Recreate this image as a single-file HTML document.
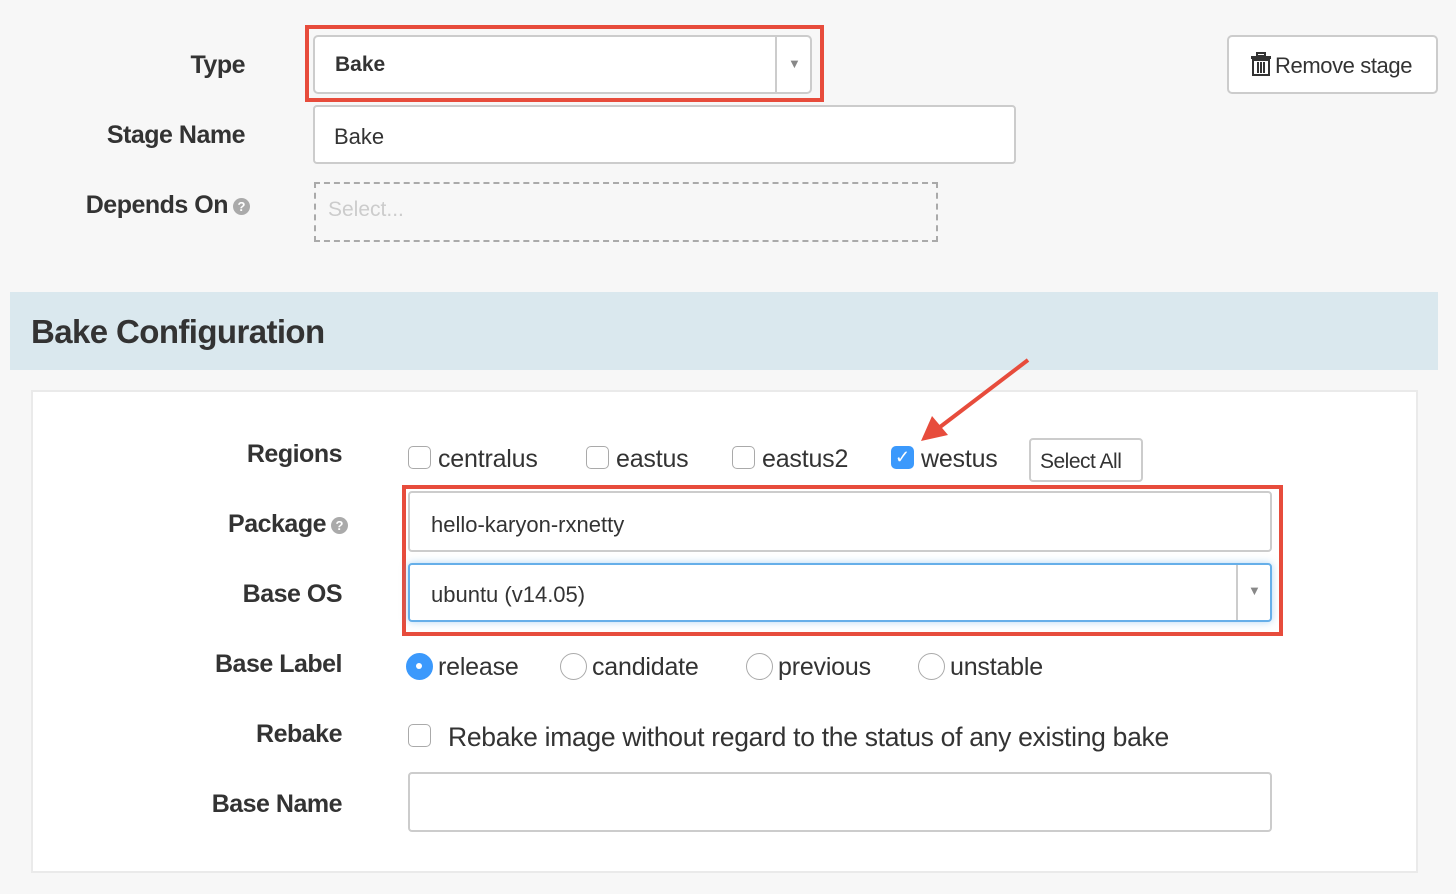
<!DOCTYPE html>
<html><head><meta charset="utf-8"><style>
*{box-sizing:border-box;margin:0;padding:0}
body{width:1456px;height:894px;background:#f7f7f7;font-family:"Liberation Sans",sans-serif;color:#333;position:relative;overflow:hidden}
.a{position:absolute}
.lbl{position:absolute;font-weight:bold;font-size:25px;text-align:right;color:#333;letter-spacing:-0.5px}
.inp{position:absolute;background:#fff;border:2px solid #ccc;border-radius:4px;font-size:22px;color:#333}
.q{display:inline-block;width:17px;height:17px;border-radius:50%;background:#aaa;color:#fff;font-size:13px;text-align:center;line-height:17px;vertical-align:2px;margin-left:5px;font-weight:bold;letter-spacing:0}
.cb{position:absolute;width:23px;height:23px;border:1.5px solid #aaa;border-radius:5px;background:#fff}
.rd{position:absolute;width:27px;height:27px;border:1.5px solid #aaa;border-radius:50%;background:#fff}
.t{position:absolute;font-size:25px;color:#333;letter-spacing:-0.2px}
</style></head><body>
<div class="lbl" style="left:60px;width:185px;top:51px">Type</div>
<div class="a" style="left:305px;top:25px;width:519px;height:77px;border:4px solid #e74c3c"></div>
<div class="inp" style="left:313px;top:35px;width:499px;height:59px;border-radius:5px">
<span class="a" style="left:20px;top:16px;font-weight:bold;font-size:21px">Bake</span>
<span class="a" style="left:460px;top:0;width:2px;height:55px;background:#ccc"></span>
<span class="a" style="left:473px;top:19px;font-size:13px;color:#888">▼</span></div>
<div class="a" style="left:1227px;top:35px;width:211px;height:59px;border:2px solid #ccc;border-radius:5px;background:#fff;font-size:22px;padding:15px 0 0 22px;letter-spacing:-0.4px">
<svg width="20" height="24" viewBox="0 0 20 24" style="vertical-align:-3px;margin-right:4px"><rect x="6" y="1" width="8" height="3" fill="none" stroke="#333" stroke-width="2"/><rect x="0" y="4" width="20" height="3" fill="#333"/><path d="M2 8h16v15H2z" fill="none" stroke="#333" stroke-width="2"/><path d="M7 10v11M10 10v11M13 10v11" stroke="#333" stroke-width="2"/></svg>Remove stage</div>
<div class="lbl" style="left:40px;width:205px;top:121px">Stage Name</div>
<div class="inp" style="left:313px;top:105px;width:703px;height:59px"><span class="a" style="left:19px;top:17px">Bake</span></div>
<div class="lbl" style="left:20px;width:230px;top:191px">Depends On<span class="q">?</span></div>
<div class="a" style="left:314px;top:182px;width:624px;height:60px;border:2px dashed #aaa;font-size:21px;color:#ccc;padding:14px 0 0 12px">Select...</div>
<div class="a" style="left:10px;top:292px;width:1428px;height:78px;background:#dae8ee"></div>
<div class="a" style="left:31px;top:313px;font-size:33px;font-weight:bold;color:#333;letter-spacing:-0.6px">Bake Configuration</div>
<div class="a" style="left:31px;top:390px;width:1387px;height:483px;background:#fff;border:2px solid #eaeaea"></div>
<div class="lbl" style="left:140px;width:202px;top:440px">Regions</div>
<div class="cb" style="left:408px;top:446px"></div><div class="t" style="left:438px;top:445px">centralus</div>
<div class="cb" style="left:586px;top:446px"></div><div class="t" style="left:616px;top:445px">eastus</div>
<div class="cb" style="left:732px;top:446px"></div><div class="t" style="left:762px;top:445px">eastus2</div>
<div class="cb" style="left:891px;top:446px;background:#3b99fc;border-color:#3b99fc;color:#fff;font-size:18px;text-align:center;line-height:20px">✓</div><div class="t" style="left:921px;top:445px">westus</div>
<div class="a" style="left:1029px;top:438px;width:114px;height:44px;border:2px solid #ccc;border-radius:4px;background:#fff;font-size:21px;padding:10px 0 0 9px;letter-spacing:-0.5px">Select All</div>
<div class="lbl" style="left:120px;width:228px;top:510px">Package<span class="q">?</span></div>
<div class="a" style="left:402px;top:485px;width:881px;height:151px;border:4px solid #e74c3c"></div>
<div class="inp" style="left:408px;top:491px;width:864px;height:61px"><span class="a" style="left:21px;top:19px">hello-karyon-rxnetty</span></div>
<div class="lbl" style="left:140px;width:202px;top:580px">Base OS</div>
<div class="inp" style="left:408px;top:563px;width:864px;height:59px;border-color:#66afe9;box-shadow:0 0 8px rgba(102,175,233,.5)"><span class="a" style="left:21px;top:17px">ubuntu (v14.05)</span>
<span class="a" style="left:826px;top:0;width:2px;height:55px;background:#ccc"></span>
<span class="a" style="left:838px;top:18px;font-size:13px;color:#888">▼</span></div>
<div class="lbl" style="left:100px;width:242px;top:650px">Base Label</div>
<div class="rd" style="left:406px;top:653px;background:#3b99fc;border-color:#3b99fc"><span class="a" style="left:9px;top:9px;width:6px;height:6px;border-radius:50%;background:#fff"></span></div><div class="t" style="left:438px;top:653px">release</div>
<div class="rd" style="left:560px;top:653px"></div><div class="t" style="left:592px;top:653px">candidate</div>
<div class="rd" style="left:746px;top:653px"></div><div class="t" style="left:778px;top:653px">previous</div>
<div class="rd" style="left:918px;top:653px"></div><div class="t" style="left:950px;top:653px">unstable</div>
<div class="lbl" style="left:140px;width:202px;top:720px">Rebake</div>
<div class="cb" style="left:408px;top:724px"></div><div class="t" style="left:448px;top:722px;font-size:26.5px;letter-spacing:-0.3px">Rebake image without regard to the status of any existing bake</div>
<div class="lbl" style="left:100px;width:242px;top:790px">Base Name</div>
<div class="inp" style="left:408px;top:772px;width:864px;height:60px"></div>
<svg class="a" style="left:0;top:0" width="1456" height="894"><line x1="1028" y1="360" x2="940" y2="427" stroke="#e74c3c" stroke-width="4"/><polygon points="921,441 932,416 948,435" fill="#e74c3c"/></svg>
</body></html>
